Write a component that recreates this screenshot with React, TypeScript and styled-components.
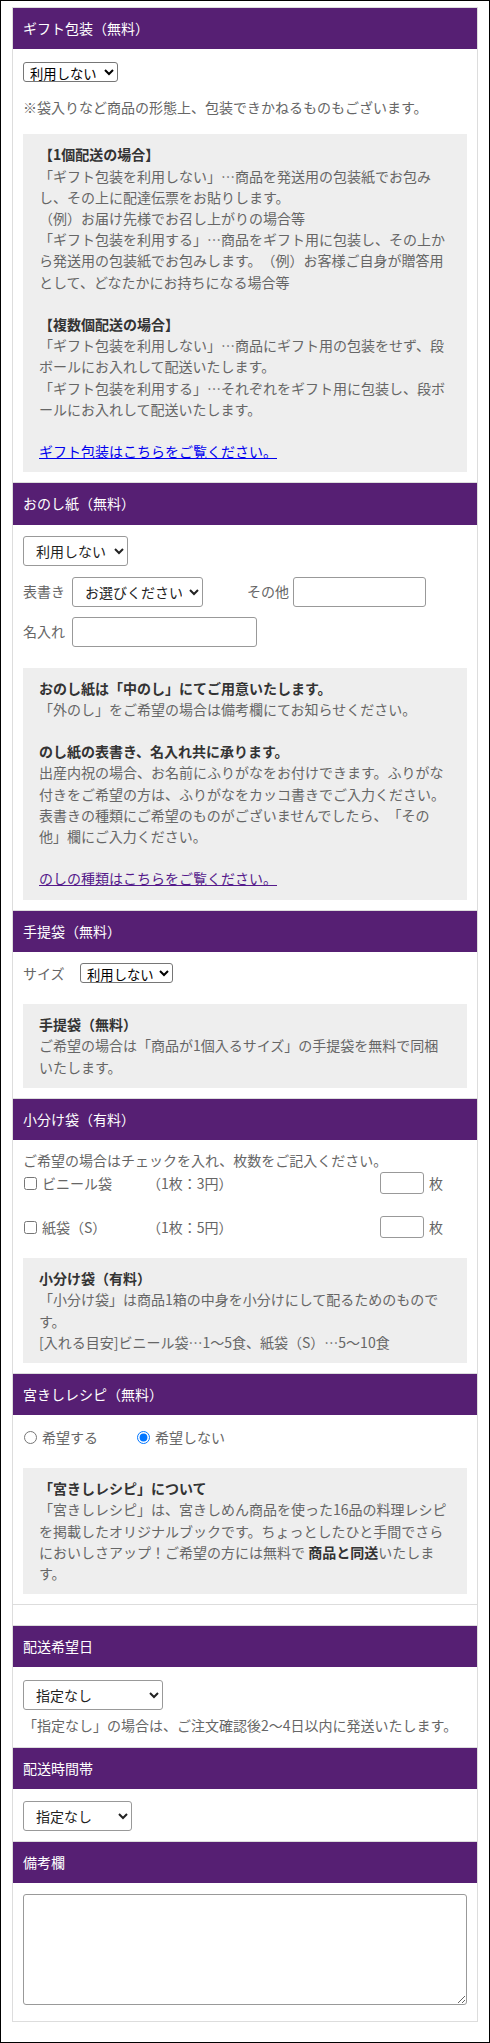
import styled, { createGlobalStyle } from 'styled-components';

const GlobalStyle = createGlobalStyle`
  html, body {
    margin: 0;
    padding: 0;
    background: #fff;
  }

  body {
    font-family: "Noto Sans CJK JP", "Noto Sans", sans-serif;
    font-size: 14px;
    line-height: 21.2px;
    color: #666;
    text-spacing-trim: space-all;
  }

  * {
    box-sizing: border-box;
  }
`;

const Frame = styled.div`
  width: 490px;
  height: 2043px;
  border: 1px solid #000;
  padding: 6px 11px 0;
`;

const Panel = styled.div`
  border: 1px solid #ddd;
  border-top: none;
`;

const Section = styled.section`
  border-top: 1px solid #ddd;
`;

const Heading = styled.h2`
  margin: 0;
  padding: 10px;
  background: #561f73;
  color: #fff;
  font-size: 14px;
  font-weight: normal;
  line-height: 21.2px;
`;

const Body = styled.div<{ $bottom?: number }>`
  padding: 10px 10px ${(p) => p.$bottom ?? 10}px;
`;

const Spacer = styled.div`
  height: 21px;
  border-top: 1px solid #ddd;
`;

const SmallSelect = styled.select<{ $w: number; $top?: number }>`
  display: block;
  width: ${(p) => p.$w}px;
  height: 20px;
  margin-top: ${(p) => p.$top ?? 0}px;
  font-family: "Noto Sans CJK JP", sans-serif;
  font-size: 13.33px;
  color: #000;
  border: 1px solid #767676;
  border-radius: 3px;
  background: #fff;
  padding: 0 0 0 2px;
`;

const Select = styled.select<{ $w: number; $top?: number }>`
  display: block;
  width: ${(p) => p.$w}px;
  height: 30px;
  margin-top: ${(p) => p.$top ?? 0}px;
  padding: 0 4px 0 8px;
  font-family: "Noto Sans CJK JP", sans-serif;
  font-size: 14px;
  color: #222;
  border: 1px solid #999;
  border-radius: 3px;
  background: #fff;
`;

const TextInput = styled.input<{ $w: number }>`
  width: ${(p) => p.$w}px;
  height: 30px;
  padding: 0 6px;
  border: 1px solid #999;
  border-radius: 3px;
  font-family: "Noto Sans CJK JP", sans-serif;
  font-size: 14px;
`;

const CountInput = styled.input`
  flex: 0 0 44px;
  width: 44px;
  height: 22px;
  margin-left: auto;
  padding: 0 4px;
  border: 1px solid #999;
  border-radius: 3px;
  font-size: 13px;
`;

const Note = styled.p<{ $top?: number }>`
  margin: ${(p) => p.$top ?? 0}px 0 0;
`;

const InfoBox = styled.div<{ $top: number }>`
  margin-top: ${(p) => p.$top}px;
  padding: 10px 16px;
  background: #eee;
  color: #666;

  b {
    color: #333;
  }

  a {
    color: #0000ee;
    text-decoration: underline;
  }

  a.visited {
    color: #551a8b;
  }
`;

const Lead = styled.b`
  display: block;
  color: #333;
`;

const FieldRow = styled.div<{ $top: number }>`
  display: flex;
  align-items: center;
  margin-top: ${(p) => p.$top}px;
`;

const FieldLabel = styled.span<{ $w: number; $gap?: number }>`
  flex: 0 0 auto;
  width: ${(p) => p.$w}px;
  margin-left: ${(p) => p.$gap ?? 0}px;
  color: #666;
`;

const BagRow = styled.div<{ $top: number }>`
  display: flex;
  align-items: center;
  height: 22px;
  margin-top: ${(p) => p.$top}px;
`;

const CheckLabel = styled.label<{ $w?: number }>`
  display: flex;
  align-items: center;
  flex: 0 0 auto;
  width: ${(p) => (p.$w ? `${p.$w}px` : 'auto')};

  input {
    width: 13px;
    height: 13px;
    margin: 0 5px 0 1px;
  }
`;

const Unit = styled.span`
  margin: 0 24px 0 5px;
`;

const RadioRow = styled.div`
  display: flex;
  align-items: center;
  height: 22px;
  margin-top: 1px;
`;

const Remarks = styled.textarea`
  display: block;
  width: 444px;
  height: 111px;
  margin-top: 1px;
  border: 1px solid #999;
  border-radius: 3px;
  font-family: "Noto Sans CJK JP", sans-serif;
  font-size: 14px;
`;

export default function App() {
  return (
    <>
      <GlobalStyle />
      <Frame>
        <Panel>
          <Section>
            <Heading>ギフト包装（無料）</Heading>
            <Body>
              <SmallSelect $w={95} $top={3}>
                <option>利用しない</option>
              </SmallSelect>
              <Note $top={15}>※袋入りなど商品の形態上、包装できかねるものもございます。</Note>
              <InfoBox $top={16}>
                <Lead>【1個配送の場合】</Lead>
                「ギフト包装を利用しない」…商品を発送用の包装紙でお包みし、その上に配達伝票をお貼りします。
                <br />
                （例）お届け先様でお召し上がりの場合等
                <br />
                「ギフト包装を利用する」…商品をギフト用に包装し、その上から発送用の包装紙でお包みします。（例）お客様ご自身が贈答用として、どなたかにお持ちになる場合等
                <br />
                <br />
                <Lead>【複数個配送の場合】</Lead>
                「ギフト包装を利用しない」…商品にギフト用の包装をせず、段ボールにお入れして配送いたします。
                <br />
                「ギフト包装を利用する」…それぞれをギフト用に包装し、段ボールにお入れして配送いたします。
                <br />
                <br />
                <a href="#gift">ギフト包装はこちらをご覧ください。</a>
              </InfoBox>
            </Body>
          </Section>

          <Section>
            <Heading>おのし紙（無料）</Heading>
            <Body>
              <Select $w={105} $top={1}>
                <option>利用しない</option>
              </Select>
              <FieldRow $top={11}>
                <FieldLabel $w={49}>表書き</FieldLabel>
                <Select $w={131}>
                  <option>お選びください</option>
                </Select>
                <FieldLabel $w={46} $gap={44}>その他</FieldLabel>
                <TextInput $w={133} type="text" />
              </FieldRow>
              <FieldRow $top={10}>
                <FieldLabel $w={49}>名入れ</FieldLabel>
                <TextInput $w={185} type="text" />
              </FieldRow>
              <InfoBox $top={21}>
                <Lead>おのし紙は「中のし」にてご用意いたします。</Lead>
                「外のし」をご希望の場合は備考欄にてお知らせください。
                <br />
                <br />
                <Lead>のし紙の表書き、名入れ共に承ります。</Lead>
                出産内祝の場合、お名前にふりがなをお付けできます。ふりがな付きをご希望の方は、ふりがなをカッコ書きでご入力ください。表書きの種類にご希望のものがございませんでしたら、「その他」欄にご入力ください。
                <br />
                <br />
                <a className="visited" href="#noshi">のしの種類はこちらをご覧ください。</a>
              </InfoBox>
            </Body>
          </Section>

          <Section>
            <Heading>手提袋（無料）</Heading>
            <Body>
              <FieldRow $top={1}>
                <FieldLabel $w={57}>サイズ</FieldLabel>
                <SmallSelect $w={93}>
                  <option>利用しない</option>
                </SmallSelect>
              </FieldRow>
              <InfoBox $top={20}>
                <Lead>手提袋（無料）</Lead>
                ご希望の場合は「商品が1個入るサイズ」の手提袋を無料で同梱いたします。
              </InfoBox>
            </Body>
          </Section>

          <Section>
            <Heading>小分け袋（有料）</Heading>
            <Body>
              <Note>ご希望の場合はチェックを入れ、枚数をご記入ください。</Note>
              <BagRow $top={1}>
                <CheckLabel $w={124}>
                  <input type="checkbox" />
                  ビニール袋
                </CheckLabel>
                <span>（1枚：3円）</span>
                <CountInput type="text" />
                <Unit>枚</Unit>
              </BagRow>
              <BagRow $top={22}>
                <CheckLabel $w={124}>
                  <input type="checkbox" />
                  紙袋（S）
                </CheckLabel>
                <span>（1枚：5円）</span>
                <CountInput type="text" />
                <Unit>枚</Unit>
              </BagRow>
              <InfoBox $top={20}>
                <Lead>小分け袋（有料）</Lead>
                「小分け袋」は商品1箱の中身を小分けにして配るためのものです。
                <br />
                [入れる目安]ビニール袋…1～5食、紙袋（S）…5～10食
              </InfoBox>
            </Body>
          </Section>

          <Section>
            <Heading>宮きしレシピ（無料）</Heading>
            <Body>
              <RadioRow>
                <CheckLabel $w={113}>
                  <input type="radio" name="recipe" />
                  希望する
                </CheckLabel>
                <CheckLabel>
                  <input type="radio" name="recipe" defaultChecked />
                  希望しない
                </CheckLabel>
              </RadioRow>
              <InfoBox $top={20}>
                <Lead>「宮きしレシピ」について</Lead>
                「宮きしレシピ」は、宮きしめん商品を使った16品の料理レシピを掲載したオリジナルブックです。ちょっとしたひと手間でさらにおいしさアップ！ご希望の方には無料で <b>商品と同送</b>いたします。
              </InfoBox>
            </Body>
          </Section>

          <Spacer />

          <Section>
            <Heading>配送希望日</Heading>
            <Body>
              <Select $w={140} $top={3}>
                <option>指定なし</option>
              </Select>
              <Note $top={5}>「指定なし」の場合は、ご注文確認後2～4日以内に発送いたします。</Note>
            </Body>
          </Section>

          <Section>
            <Heading>配送時間帯</Heading>
            <Body>
              <Select $w={109} $top={2}>
                <option>指定なし</option>
              </Select>
            </Body>
          </Section>

          <Section>
            <Heading>備考欄</Heading>
            <Body $bottom={16}>
              <Remarks />
            </Body>
          </Section>
        </Panel>
      </Frame>
    </>
  );
}
